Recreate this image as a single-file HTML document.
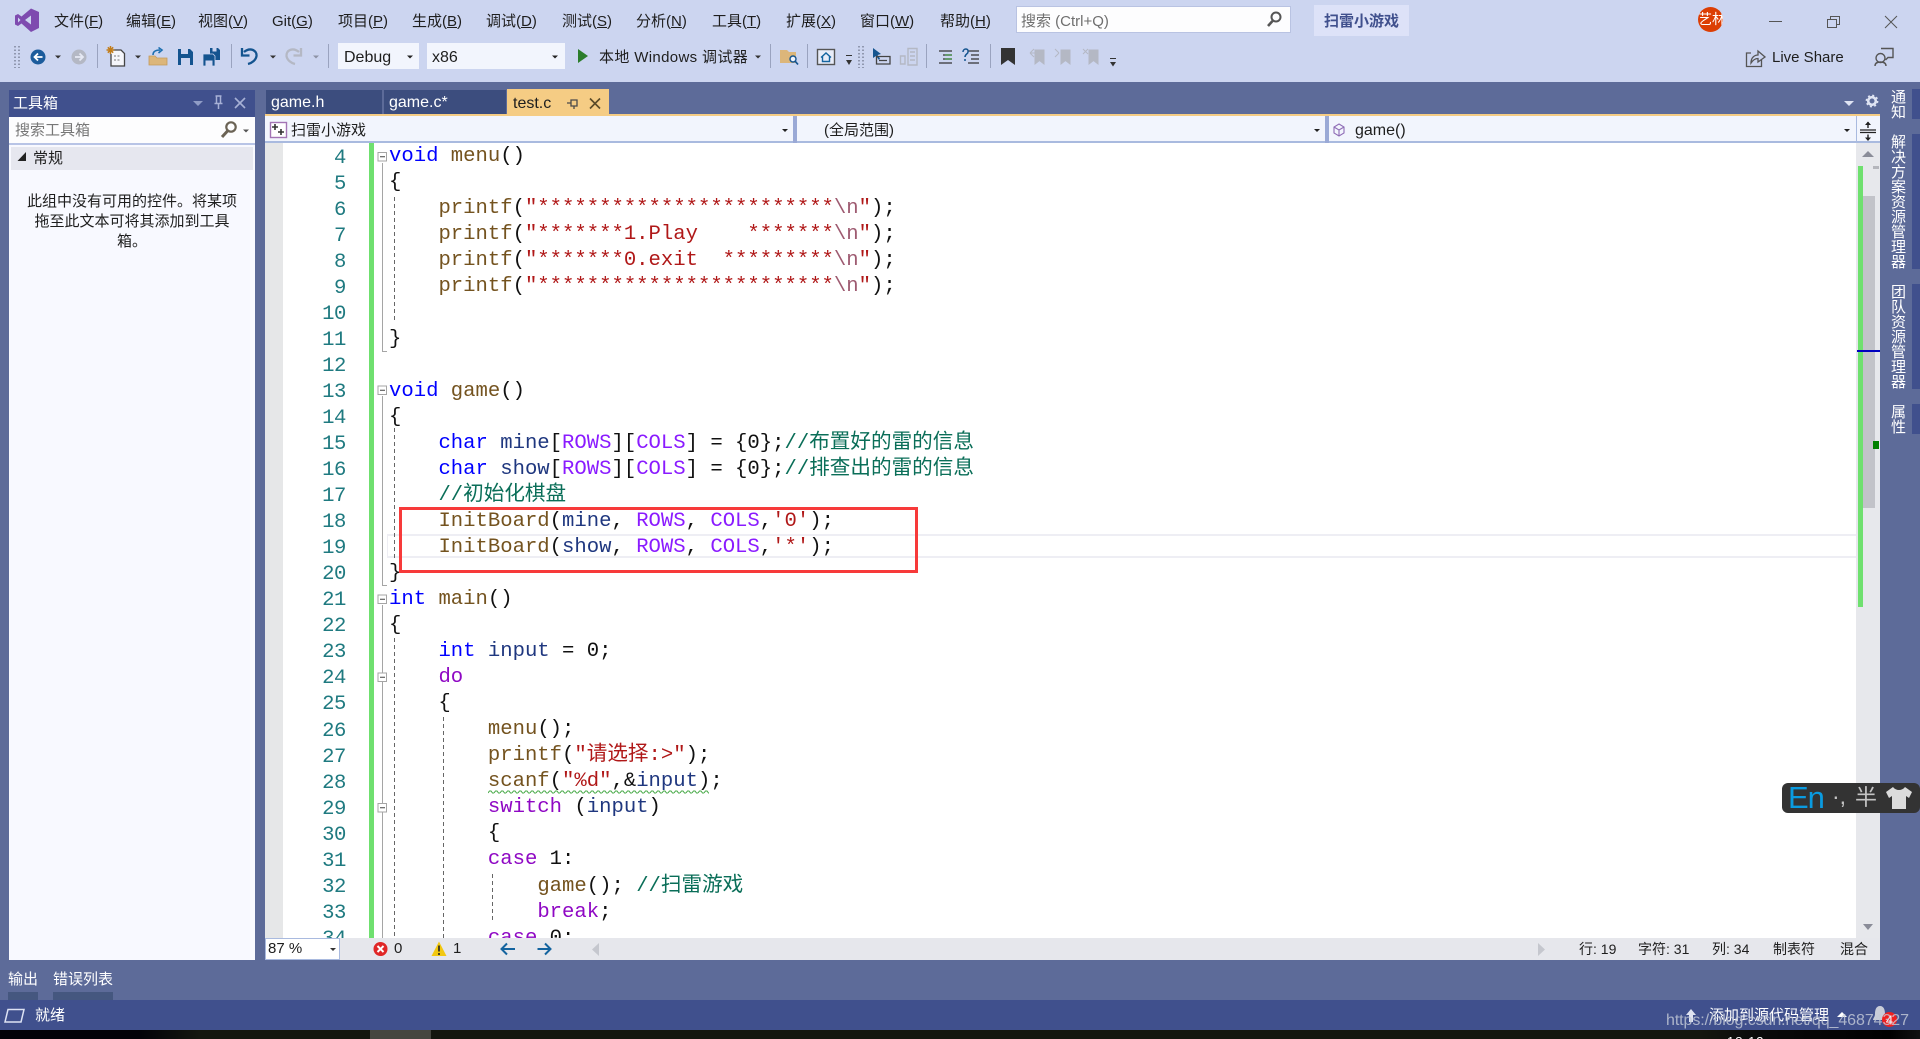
<!DOCTYPE html>
<html lang="zh-CN">
<head>
<meta charset="utf-8">
<title>扫雷小游戏 - Microsoft Visual Studio</title>
<style>
html,body{margin:0;padding:0;width:1920px;height:1039px;overflow:hidden;background:#5D6B99;}
body{position:relative;font-family:"Liberation Sans","Noto Sans CJK SC",sans-serif;font-size:15px;color:#1e1e1e;}
.b{position:absolute;}
.t{position:absolute;white-space:nowrap;line-height:18px;}
.w{color:#fff;}
svg.o{position:absolute;left:0;top:0;width:1920px;height:1039px;z-index:5;}
#code,#nums{position:absolute;margin:0;font-family:"Liberation Mono","Noto Sans CJK SC",monospace;font-size:20.6px;line-height:26.05px;white-space:pre;}
#clip{position:absolute;left:265px;top:143px;width:1591px;height:795px;overflow:hidden;background:#fff;}
#code{left:124px;top:1.2px;color:#111;z-index:2;}
#nums{left:20px;top:2.5px;width:61px;text-align:right;color:#1f7a80;letter-spacing:-.4px;z-index:2;}
.k{color:#0000ff}.c{color:#8f08c4}.m{color:#8a1bff}.f{color:#74531f}.s{color:#b01818}.e{color:#9e5b71}.v{color:#1f377f}.g{color:#0a6e58}
.vt{position:absolute;writing-mode:vertical-rl;color:#fff;font-size:15px;line-height:16px;left:1889px;white-space:nowrap;}
</style>
</head>
<body>
<!-- title + toolbar -->
<div class="b" style="left:0;top:0;width:1920px;height:82px;background:#CCD5F0"></div>

<!-- menu -->
<div class="t" style="left:54px;top:13px">文件(<u>F</u>)</div>
<div class="t" style="left:126px;top:13px">编辑(<u>E</u>)</div>
<div class="t" style="left:198px;top:13px">视图(<u>V</u>)</div>
<div class="t" style="left:272px;top:13px">Git(<u>G</u>)</div>
<div class="t" style="left:338px;top:13px">项目(<u>P</u>)</div>
<div class="t" style="left:412px;top:13px">生成(<u>B</u>)</div>
<div class="t" style="left:486px;top:13px">调试(<u>D</u>)</div>
<div class="t" style="left:562px;top:13px">测试(<u>S</u>)</div>
<div class="t" style="left:636px;top:13px">分析(<u>N</u>)</div>
<div class="t" style="left:712px;top:13px">工具(<u>T</u>)</div>
<div class="t" style="left:786px;top:13px">扩展(<u>X</u>)</div>
<div class="t" style="left:860px;top:13px">窗口(<u>W</u>)</div>
<div class="t" style="left:940px;top:13px">帮助(<u>H</u>)</div>

<div class="b" style="left:1016px;top:6px;width:273px;height:25px;background:#fdfdfe;border:1px solid #b9c3e2"></div>
<div class="t" style="left:1021px;top:13px;color:#6f6f6f">搜索 (Ctrl+Q)</div>
<div class="b" style="left:1314px;top:5px;width:95px;height:31px;background:#DDE2F8"></div>
<div class="t" style="left:1324px;top:13px;color:#40508D;font-weight:700">扫雷小游戏</div>
<div class="b" style="left:1698px;top:7px;width:25px;height:25px;border-radius:50%;background:#DC3E04;overflow:hidden;color:#fff;font-size:14px;line-height:25px;text-align:center;white-space:nowrap">艺林</div>

<!-- toolbar combos -->
<div class="b" style="left:338px;top:43px;width:81px;height:26px;background:#F2F5FD"></div>
<div class="t" style="left:344px;top:49px;font-size:16px">Debug</div>
<div class="b" style="left:427px;top:43px;width:138px;height:26px;background:#F2F5FD"></div>
<div class="t" style="left:432px;top:49px;font-size:16px">x86</div>
<div class="t" style="left:599px;top:49px;letter-spacing:.35px">本地 Windows 调试器</div>
<div class="t" style="left:1772px;top:49px">Live Share</div>

<!-- toolbox -->
<div class="b" style="left:9px;top:90px;width:246px;height:27px;background:#40508D"></div>
<div class="t w" style="left:13px;top:95px">工具箱</div>
<div class="b" style="left:9px;top:117px;width:246px;height:26px;background:#fdfdfe"></div>
<div class="t" style="left:15px;top:122px;color:#777">搜索工具箱</div>
<div class="b" style="left:9px;top:143px;width:246px;height:817px;background:#F8F9FF;border-top:2px solid #B8C4E6;box-sizing:border-box"></div>
<div class="b" style="left:11px;top:147px;width:242px;height:23px;background:#E6E7EF"></div>
<div class="t" style="left:33px;top:150px">常规</div>
<div class="t" style="left:9px;width:246px;text-align:center;top:192px;line-height:20px;white-space:normal;font-size:15px">此组中没有可用的控件。将某项<br>拖至此文本可将其添加到工具<br>箱。</div>

<!-- tabs -->
<div class="b" style="left:266px;top:90px;width:116px;height:24px;background:#3C4D7E"></div>
<div class="t w" style="left:271px;top:94px;font-size:16px">game.h</div>
<div class="b" style="left:384px;top:90px;width:122px;height:24px;background:#3C4D7E"></div>
<div class="t w" style="left:389px;top:94px;font-size:16px">game.c*</div>
<div class="b" style="left:507px;top:89px;width:102px;height:25px;background:#F5CC84"></div>
<div class="t" style="left:513px;top:95px;font-size:16px">test.c</div>
<div class="b" style="left:265px;top:114px;width:1615px;height:2px;background:#F5CC84"></div>

<!-- nav bar -->
<div class="b" style="left:265px;top:116px;width:1615px;height:27px;background:#F2F5FD;border-bottom:2px solid #A9BADF;box-sizing:border-box"></div>
<div class="b" style="left:793px;top:116px;width:4px;height:27px;background:#9AA9D6"></div>
<div class="b" style="left:1325px;top:116px;width:4px;height:27px;background:#9AA9D6"></div>
<div class="b" style="left:1856px;top:116px;width:1px;height:27px;background:#A9BADF"></div>
<div class="t" style="left:291px;top:121.5px">扫雷小游戏</div>
<div class="t" style="left:824px;top:121.5px">(全局范围)</div>
<div class="t" style="left:1355px;top:121.5px;font-size:16px">game()</div>

<!-- editor -->
<div id="clip">
  <div class="b" style="left:0;top:0;width:18px;height:795px;background:#E6E7E8"></div>
  <div class="b" style="left:104px;top:0;width:5px;height:795px;background:#6FE06F"></div>
  <div class="b" style="left:122px;top:391px;width:1469px;height:24px;border-top:2px solid #EEEEF4;border-bottom:2px solid #EEEEF4;border-left:1px solid #EEEEF4;box-sizing:border-box"></div>
<pre id="nums">4
5
6
7
8
9
10
11
12
13
14
15
16
17
18
19
20
21
22
23
24
25
26
27
28
29
30
31
32
33
34</pre>
<pre id="code"><span class="k">void</span> <span class="f">menu</span>()
{
    <span class="f">printf</span>(<span class="s">"************************</span><span class="e">\n</span><span class="s">"</span>);
    <span class="f">printf</span>(<span class="s">"*******1.Play    *******</span><span class="e">\n</span><span class="s">"</span>);
    <span class="f">printf</span>(<span class="s">"*******0.exit  *********</span><span class="e">\n</span><span class="s">"</span>);
    <span class="f">printf</span>(<span class="s">"************************</span><span class="e">\n</span><span class="s">"</span>);

}

<span class="k">void</span> <span class="f">game</span>()
{
    <span class="k">char</span> <span class="v">mine</span>[<span class="m">ROWS</span>][<span class="m">COLS</span>] = {0};<span class="g">//布置好的雷的信息</span>
    <span class="k">char</span> <span class="v">show</span>[<span class="m">ROWS</span>][<span class="m">COLS</span>] = {0};<span class="g">//排查出的雷的信息</span>
    <span class="g">//初始化棋盘</span>
    <span class="f">InitBoard</span>(<span class="v">mine</span>, <span class="m">ROWS</span>, <span class="m">COLS</span>,<span class="s">'0'</span>);
    <span class="f">InitBoard</span>(<span class="v">show</span>, <span class="m">ROWS</span>, <span class="m">COLS</span>,<span class="s">'*'</span>);
}
<span class="k">int</span> <span class="f">main</span>()
{
    <span class="k">int</span> <span class="v">input</span> = 0;
    <span class="c">do</span>
    {
        <span class="f">menu</span>();
        <span class="f">printf</span>(<span class="s">"请选择:&gt;"</span>);
        <span class="f">scanf</span>(<span class="s">"%d"</span>,&amp;<span class="v">input</span>);
        <span class="c">switch</span> (<span class="v">input</span>)
        {
        <span class="c">case</span> 1:
            <span class="f">game</span>(); <span class="g">//扫雷游戏</span>
            <span class="c">break</span>;
        <span class="c">case</span> 0:</pre>
</div>

<!-- scrollbar -->
<div class="b" style="left:1856px;top:143px;width:24px;height:795px;background:#E7E8EC"></div>
<div class="b" style="left:1858px;top:166px;width:5px;height:441px;background:#6FE06F"></div>
<div class="b" style="left:1863px;top:196px;width:12px;height:312px;background:#C2C3C9"></div>
<div class="b" style="left:1873px;top:166px;width:6px;height:3px;background:#B5B6BC"></div>
<div class="b" style="left:1857px;top:350px;width:23px;height:2px;background:#0000C0"></div>
<div class="b" style="left:1873px;top:441px;width:6px;height:8px;background:#008000"></div>

<!-- editor footer -->
<div class="b" style="left:265px;top:938px;width:1615px;height:22px;background:#E6E7EC"></div>
<div class="b" style="left:265px;top:938px;width:75px;height:22px;background:#fff;border:1px solid #A9BADF;box-sizing:border-box"></div>
<div class="t" style="left:268px;top:940px;font-size:15px">87 %</div>
<div class="t" style="left:394px;top:940px;font-size:15px">0</div>
<div class="t" style="left:453px;top:940px;font-size:15px">1</div>
<div class="t" style="left:1579px;top:940px;font-size:14px">行: 19</div>
<div class="t" style="left:1638px;top:940px;font-size:14px">字符: 31</div>
<div class="t" style="left:1712px;top:940px;font-size:14px">列: 34</div>
<div class="t" style="left:1773px;top:940px;font-size:14px">制表符</div>
<div class="t" style="left:1840px;top:940px;font-size:14px">混合</div>

<!-- right side tabs -->
<div class="b" style="left:1912px;top:89px;width:8px;height:30px;background:#40508D"></div>
<div class="b" style="left:1912px;top:134px;width:8px;height:135px;background:#40508D"></div>
<div class="b" style="left:1912px;top:284px;width:8px;height:105px;background:#40508D"></div>
<div class="b" style="left:1912px;top:404px;width:8px;height:30px;background:#40508D"></div>
<div class="vt" style="top:89px">通知</div>
<div class="vt" style="top:134px">解决方案资源管理器</div>
<div class="vt" style="top:284px">团队资源管理器</div>
<div class="vt" style="top:404px">属性</div>

<!-- bottom panel tabs -->
<div class="t w" style="left:8px;top:971px">输出</div>
<div class="t w" style="left:53px;top:971px">错误列表</div>
<div class="b" style="left:8px;top:992px;width:30px;height:8px;background:#45577F"></div>
<div class="b" style="left:53px;top:992px;width:60px;height:8px;background:#45577F"></div>

<!-- status bar -->
<div class="b" style="left:0;top:1000px;width:1920px;height:30px;background:#40508D"></div>
<div class="t w" style="left:35px;top:1007px">就绪</div>
<div class="t w" style="left:1709px;top:1007px">添加到源代码管理</div>
<div class="b" style="left:0;top:1030px;width:1920px;height:9px;background:linear-gradient(90deg,#020208 0,#020208 140px,#14170f 200px,#14170f 1700px,#0a0a0a 1760px,#000 1890px,#111 1920px);overflow:hidden">
  <div class="b" style="left:370px;top:0;width:61px;height:9px;background:#45463f"></div>
  <div class="t" style="left:1727px;top:3px;color:#fff;font-size:13px;letter-spacing:1px">18:13</div>
</div>

<!-- IME -->
<div class="b" style="left:1782px;top:783px;width:138px;height:30px;background:#333;border-radius:6px;z-index:6"></div>
<div class="t" style="left:1788px;top:783px;line-height:30px;font-size:31px;color:#0A9BE0;z-index:7;letter-spacing:-1px">En</div>
<div class="t" style="left:1832px;top:781px;line-height:30px;font-size:23px;color:#c4c4c4;z-index:7">·,</div>
<div class="t" style="left:1855px;top:783px;line-height:30px;font-size:22px;color:#c4c4c4;z-index:7">半</div>

<svg class="o" viewBox="0 0 1920 1039" xmlns="http://www.w3.org/2000/svg">
  <defs>
    <pattern id="sq" width="6" height="4" patternUnits="userSpaceOnUse" x="488" y="790">
      <path d="M0 3 L1.5 1 L3 1 L4.5 3 L6 3" fill="none" stroke="#45a845" stroke-width="1"/>
    </pattern>
  </defs>
  <!-- VS logo -->
  <path fill-rule="evenodd" fill="#7E4BAF" d="M31 8.5 L39 12 V28 L31 32 L21.5 23.5 L18 26 L15 24.5 V15.5 L18 14 L21.5 16.5 Z M18 17.5 V22.5 L20.5 20 Z M25 20 L31 24.5 V15.5 Z"/>

  <!-- search icon top -->
  <circle cx="1276" cy="17" r="4.5" fill="none" stroke="#555" stroke-width="2"/><path d="M1272.5 21 L1268 26" stroke="#555" stroke-width="2.6"/>

  <!-- window controls -->
  <path d="M1769 21.5 H1782" stroke="#555" stroke-width="1"/>
  <path d="M1827.5 19.5 H1836.5 V27.5 H1827.5 Z M1830.5 19.5 V16.5 H1839.5 V24.5 H1836.5" fill="none" stroke="#555"/>
  <path d="M1885 16 L1897 28 M1897 16 L1885 28" stroke="#555"/>

  <!-- gripper -->
  <path d="M15 46 V68 M19 46 V68" stroke="#7d8399" stroke-width="1.5" stroke-dasharray="1.5 2"/>
  <!-- back / forward -->
  <circle cx="38" cy="57" r="7.5" fill="#1C5C9C"/><path d="M42.5 57 H35 M38 53.5 L34.5 57 L38 60.5" fill="none" stroke="#fff" stroke-width="1.8"/>
  <polygon points="55,55.5 61,55.5 58,58.5" fill="#333"/>
  <circle cx="79" cy="57" r="7.5" fill="#B4B8C4"/><path d="M75 57 H82.5 M79.5 53.5 L83 57 L79.5 60.5" fill="none" stroke="#E6E9F4" stroke-width="1.8"/>
  <path d="M97.5 44 V68 M231.5 44 V68 M328.5 44 V68 M770.5 44 V68 M807.5 44 V68 M926.5 44 V68 M990.5 44 V68" stroke="#9AA3BF"/>
  <!-- new project -->
  <path d="M113 50 H121 L124.5 53.5 V66 H111 V54" fill="#F5F6FB" stroke="#444" stroke-width="1.3"/>
  <path d="M114 56 H121 M114 60 H121" stroke="#777" stroke-dasharray="2 1.5"/>
  <path d="M110.5 46 V54 M106.5 50 H114.5 M107.8 47.3 L113.2 52.7 M113.2 47.3 L107.8 52.7" stroke="#C27D1A" stroke-width="1.5"/>
  <polygon points="135,55.5 141,55.5 138,58.5" fill="#333"/>
  <!-- open -->
  <path d="M149 56 H155 L157 58 H167 V65 H149 Z" fill="#DCB67A" stroke="#C39A5C" stroke-width=".8"/>
  <path d="M153 55 C153 51 156 50 160 50" fill="none" stroke="#1C6FB0" stroke-width="1.6"/><path d="M158.5 47.5 L162 50 L158.5 53" fill="none" stroke="#1C6FB0" stroke-width="1.6"/>
  <!-- save -->
  <path d="M178 49 H190 L193 52 V65 H178 Z" fill="#14548F"/><rect x="181" y="49" width="7" height="5" fill="#CCD5F0"/><rect x="181" y="58" width="9" height="7" fill="#CCD5F0"/>
  <!-- save all -->
  <path d="M210 48 H218 L220 50 V60 H210 Z" fill="#14548F"/><rect x="212.5" y="48" width="4" height="3.5" fill="#CCD5F0"/>
  <path d="M203 54 H213 L215 56 V66 H203 Z" fill="#14548F" stroke="#CCD5F0" stroke-width=".8"/><rect x="205.5" y="60.5" width="7" height="5.5" fill="#CCD5F0"/>
  <!-- undo / redo -->
  <path d="M244 52 C250 47 257 50 256.5 56 C256 60 252 63 248 64" fill="none" stroke="#14548F" stroke-width="2.3"/><path d="M242 48 V55.5 H249.5" fill="none" stroke="#14548F" stroke-width="2.3"/>
  <polygon points="270,55.5 276,55.5 273,58.5" fill="#333"/>
  <path d="M299 52 C293 47 286 50 286.5 56 C287 60 291 63 295 64" fill="none" stroke="#B4B8C4" stroke-width="2.3"/><path d="M301 48 V55.5 H293.5" fill="none" stroke="#B4B8C4" stroke-width="2.3"/>
  <polygon points="313,55.5 319,55.5 316,58.5" fill="#8d92a5"/>
  <!-- combo arrows -->
  <polygon points="407,55.5 413,55.5 410,58.5" fill="#222"/>
  <polygon points="552,55.5 558,55.5 555,58.5" fill="#222"/>
  <polygon points="578,49 588,56 578,63" fill="#2B7D2B"/>
  <polygon points="755,55.5 761,55.5 758,58.5" fill="#333"/>
  <!-- folder search -->
  <path d="M780 50 H787 L789 52 H796 V63 H780 Z" fill="#DCB67A"/><circle cx="793" cy="59" r="3" fill="#F0F3FC" stroke="#14548F" stroke-width="1.4"/><path d="M795 61 L798 64.5" stroke="#14548F" stroke-width="1.7"/>
  <!-- home -->
  <rect x="817.5" y="49.5" width="17" height="15" fill="#E8ECF8" stroke="#555" stroke-width="1.4"/>
  <path d="M821 57.5 L826 53 L831 57.5 M822.5 56.5 V61.5 H829.5 V56.5" fill="none" stroke="#14649F" stroke-width="1.4"/>
  <path d="M846 55.5 H852" stroke="#333"/><polygon points="846,60 852,60 849,65" fill="#333"/>
  <path d="M859 46 V68 M863 46 V68" stroke="#7d8399" stroke-width="1.5" stroke-dasharray="1.5 2"/>
  <!-- nav to -->
  <polygon points="873,48 873,58 876,56 879,60 880,58.5 877.5,55 881,54" fill="#14548F"/>
  <path d="M876.5 56.5 H890 V64 H876.5 Z M879 60.5 H887" fill="none" stroke="#444" stroke-width="1.3"/>
  <path d="M900.5 56 H905 V64 H900.5 Z M908 48.5 H917 V65 H908 Z M910 52 H915 M910 56 H915 M910 60 H915" fill="none" stroke="#B4B8C4" stroke-width="1.4"/>
  <!-- indent icons -->
  <path d="M939 51 H952 M943 55 H952 M943 59 H952 M939 63 H952" stroke="#333" stroke-width="1.3"/><path d="M945 55 H952 M945 59 H952" stroke="#3E8E3E" stroke-width="1.3"/>
  <path d="M968 51 H979 M971 55 H979 M971 59 H979 M968 63 H979" stroke="#333" stroke-width="1.3"/><path d="M963 52 C963 48 969 48 968 52 C968 54 965 54 965 57" fill="none" stroke="#14548F" stroke-width="1.5"/><circle cx="965" cy="60" r="1" fill="#14548F"/>
  <!-- bookmarks -->
  <path d="M1001 48 H1015 V65 L1008 60 L1001 65 Z" fill="#333"/>
  <path d="M1035 50 H1044 V64 L1039.5 60.5 L1035 64 Z M1030 53 L1034 49 M1030 53 L1034 57 M1030 53 H1038" fill="#B4B8C4" stroke="#B4B8C4"/>
  <path d="M1061 50 H1070 V64 L1065.5 60.5 L1061 64 Z M1059 53 L1055 49 M1059 53 L1055 57" fill="#B4B8C4" stroke="#B4B8C4"/>
  <path d="M1089 50 H1098 V64 L1093.5 60.5 L1089 64 Z M1083 49 L1088 54 M1088 49 L1083 54" fill="#B4B8C4" stroke="#B4B8C4"/>
  <path d="M1110 58.5 H1116" stroke="#333"/><polygon points="1110,62 1116,62 1113,66.5" fill="#333"/>

  <!-- live share -->
  <path d="M1751 53 H1746.5 V66.5 H1761.5 V60" fill="none" stroke="#555" stroke-width="1.3"/>
  <path d="M1751 63 C1751 57 1755 55 1758 55 V51 L1765 57 L1758 62 V58.5 C1755 58.5 1753 60 1751 63 Z" fill="none" stroke="#555" stroke-width="1.3"/>
  <!-- person feedback -->
  <circle cx="1880.5" cy="58" r="4.5" fill="none" stroke="#555" stroke-width="1.4"/><path d="M1875 66 C1875 63 1877 62 1880.5 62 C1884 62 1886 63 1886 66" fill="none" stroke="#555" stroke-width="1.4"/>
  <path d="M1881 48.5 H1893 V57.5 H1888 L1885.5 60" fill="none" stroke="#555" stroke-width="1.4"/>

  <!-- toolbox header icons -->
  <polygon points="193,101 203,101 198,106" fill="#8f9cc6"/>
  <path d="M215.5 96 H221.5 M216.5 96 V103 M220.5 96 V103 M214.5 103.5 H222.5 M218.5 104 V109" fill="none" stroke="#a7b1d6" stroke-width="1.5"/>
  <path d="M235 98 L245 108 M245 98 L235 108" stroke="#a7b1d6" stroke-width="1.6"/>
  <!-- toolbox search -->
  <circle cx="231" cy="127" r="4.7" fill="none" stroke="#6b6355" stroke-width="2.2"/><path d="M227.5 131 L222 137" stroke="#6b6355" stroke-width="3"/>
  <polygon points="243,129.5 249,129.5 246,132.5" fill="#555"/>
  <polygon points="26,152 26,161 17.5,161" fill="#222"/>

  <!-- tab pin/close -->
  <path d="M590 98.5 L600 108.5 M600 98.5 L590 108.5" stroke="#5a4a28" stroke-width="1.6"/>
  <path d="M567 103 H571 M571 100 V106 H577 V100 Z M574 106 V109" fill="none" stroke="#4a4a4a" stroke-width="1.3"/>

  <!-- top-right tab settings -->
  <polygon points="1844,101 1854,101 1849,106" fill="#dfe4f3"/>
  <circle cx="1872" cy="101" r="3.8" fill="none" stroke="#dfe4f3" stroke-width="2.6"/>
  <circle cx="1872" cy="101" r="5.6" fill="none" stroke="#dfe4f3" stroke-width="1.6" stroke-dasharray="2 2.4"/>

  <!-- nav icons -->
  <rect x="270.5" y="122.5" width="16" height="15" fill="#fff" stroke="#A374B5" stroke-width="1.4"/>
  <path d="M275 124 V130 M272 127 H278 M281 129 V135 M278 132 H284" stroke="#333" stroke-width="1.6"/>
  <polygon points="782,129 788,129 785,132" fill="#222"/>
  <polygon points="1314,129 1320,129 1317,132" fill="#222"/>
  <path d="M1339 124 L1344 127 V133 L1339 136 L1334 133 V127 Z M1334 127 L1339 130 L1344 127 M1339 130 V136" fill="none" stroke="#8E6BB5" stroke-width="1.1"/>
  <polygon points="1844,129 1850,129 1847,132" fill="#222"/>
  <path d="M1860 130 H1876 M1860 132.5 H1876" stroke="#222" stroke-width="1.2"/>
  <path d="M1868 122 V128 M1868 134.5 V140" stroke="#222" stroke-width="1.4"/><polygon points="1865,125 1871,125 1868,121.5" fill="#222"/><polygon points="1865,137.5 1871,137.5 1868,141" fill="#222"/>

  <!-- fold margin -->
  <g fill="#fff" stroke="#a5a5a5">
    <path d="M382.5 163 V351.5 H387" fill="none"/>
    <path d="M382.5 396 V585.5 H387" fill="none"/>
    <path d="M382.5 605 V938" fill="none"/>
    <rect x="378" y="152.5" width="8.5" height="8.5"/>
    <rect x="378" y="386" width="8.5" height="8.5"/>
    <rect x="378" y="595" width="8.5" height="8.5"/>
    <rect x="378" y="673" width="8.5" height="8.5"/>
    <rect x="378" y="803.5" width="8.5" height="8.5"/>
  </g>
  <path d="M380 156.7 H385 M380 390.2 H385 M380 599.2 H385 M380 677.2 H385 M380 807.7 H385" stroke="#444"/>
  <!-- indent guides -->
  <g stroke="#666" stroke-dasharray="4 3" fill="none">
    <path d="M394.5 197 V323"/>
    <path d="M394.5 428 V560"/>
    <path d="M394.5 638 V938"/>
    <path d="M443.5 717 V938"/>
    <path d="M492.5 874 V923"/>
  </g>
  <!-- squiggle -->
  <rect x="488" y="790" width="221" height="4" fill="url(#sq)"/>
  <!-- red rect -->
  <rect x="400.5" y="508.5" width="516" height="63" fill="none" stroke="#F73A3A" stroke-width="3"/>
  <!-- scrollbar arrows -->
  <polygon points="1862,157 1874,157 1868,151" fill="#8a8c98"/>
  <polygon points="1863,924 1873,924 1868,930" fill="#8a8c98"/>
  <!-- footer icons -->
  <polygon points="330,948 336,948 333,951" fill="#333"/>
  <circle cx="380.5" cy="949" r="7" fill="#E02727"/><path d="M377.5 946 L383.5 952 M383.5 946 L377.5 952" stroke="#fff" stroke-width="2"/>
  <path d="M439 941.5 L446.5 956 H431.5 Z" fill="#F2C811"/><path d="M439 945.5 V951.5 M439 953 V955" stroke="#222" stroke-width="1.6"/>
  <path d="M515 949 H502 M507 943.5 L501.5 949 L507 954.5" fill="none" stroke="#14649F" stroke-width="2"/>
  <path d="M537.5 949 H550.5 M545 943.5 L550.5 949 L545 954.5" fill="none" stroke="#14649F" stroke-width="2"/>
  <polygon points="599,943 599,956 592,949.5" fill="#C5C7CE"/>
  <polygon points="1538,943 1538,956 1545,949.5" fill="#C5C7CE"/>
  <!-- status icons -->
  <path d="M8 1009.5 H24 L21 1022 H5 Z" fill="none" stroke="#DDE2F4" stroke-width="1.5"/>
  <path d="M1691 1009 L1696 1015 H1693 V1022 H1689 V1015 H1686 Z" fill="#dfe3f1"/>
  <polygon points="1837,1017 1847,1017 1842,1012" fill="#fff"/>
  <path d="M1880 1006 C1884 1006 1885 1010 1885 1014 C1885 1017 1887 1018 1887 1020 H1873 C1873 1018 1875 1017 1875 1014 C1875 1010 1876 1006 1880 1006 Z" fill="#C9CDD9"/>
  <circle cx="1889.5" cy="1019.5" r="7.5" fill="#EE2020"/>
  <text x="1889.5" y="1024.5" text-anchor="middle" font-family="Liberation Sans" font-size="13" fill="#fff">4</text>
  <!-- watermark -->
  <text x="1666" y="1025" font-family="Liberation Sans" font-size="16" fill="#C5CAD8" fill-opacity=".82" textLength="243">https://blog.csdn.net/qq_46874327</text>
</svg>

<!-- IME shirt -->
<svg style="position:absolute;left:1884px;top:785px;z-index:8" width="30" height="26" viewBox="0 0 30 26" xmlns="http://www.w3.org/2000/svg">
  <path d="M9 2 C12 6 18 6 21 2 L28 7 L25 13 L22 11 V24 H8 V11 L5 13 L2 7 Z" fill="#DCDCDC"/>
</svg>
</body>
</html>
